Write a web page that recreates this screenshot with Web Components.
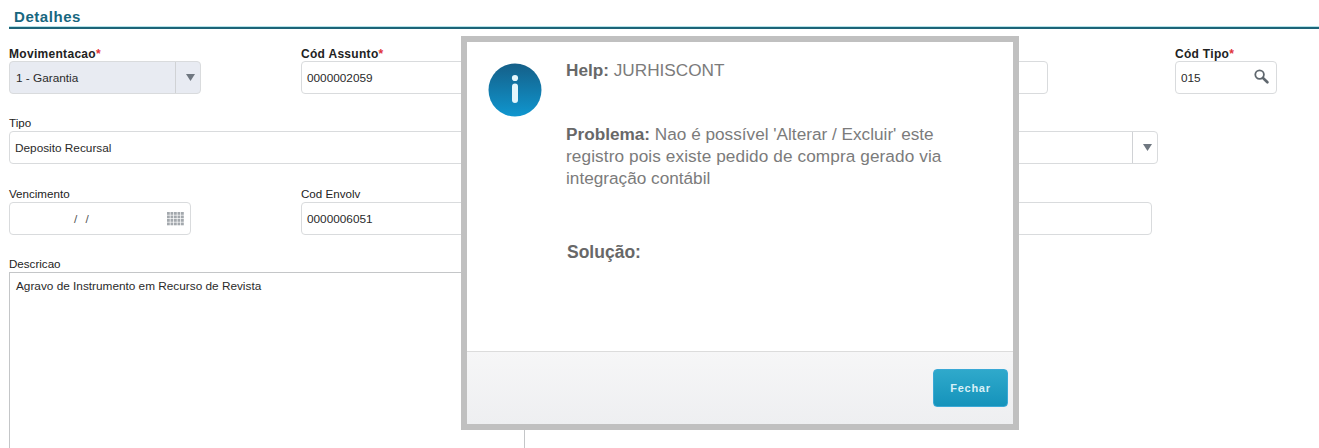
<!DOCTYPE html>
<html lang="pt">
<head>
<meta charset="utf-8">
<title>Detalhes</title>
<style>
    html, body { margin: 0; padding: 0; background: #fff; height: 448px; overflow: hidden; }
    body { font-family: "Liberation Sans", Arial, sans-serif; position: relative; }
</style>
</head>
<body>
<detail-form></detail-form>
<help-dialog></help-dialog>

<script>
class FormSection extends HTMLElement {
    constructor() {
        super();
        this.attachShadow({ mode: "open" });
        this.shadowRoot.innerHTML = `
            <style>
                :host { display: block; padding: 9px 0 0 9px; height: 448px; overflow: hidden; box-sizing: border-box; }
                h2 {
                    margin: 0;
                    padding-left: 5px;
                    font-size: 15px;
                    letter-spacing: .55px;
                    line-height: 16px;
                    font-weight: bold;
                    color: #17677f;
                    height: 18px;
                    border-bottom: 2px solid #1d6478;
                    box-shadow: 0 -1px 0 #b4e4ea inset;
                }
                .rows { display: flex; flex-direction: column; padding-top: 18px; }
                .row { display: flex; align-items: flex-start; }
                .r1 { height: 70px; }
                .r2 { height: 71px; }
                .r3 { height: 70px; }
            </style>
            <h2>Detalhes</h2>
            <div class="rows">
                <div class="row r1">
                    <form-field label="Movimentacao" required value="1 - Garantia" kind="select" disabled style="width:192px;margin-right:100px"></form-field>
                    <form-field label="Cód Assunto" required value="0000002059" style="width:747px;margin-right:127px"></form-field>
                    <form-field label="Cód Tipo" required value="015" kind="search" style="width:102px"></form-field>
                </div>
                <div class="row r2">
                    <form-field label="Tipo" value="Deposito Recursal" kind="select" plain style="width:1149px"></form-field>
                </div>
                <div class="row r3">
                    <form-field label="Vencimento" plain value="/ /" kind="date" style="width:182px;margin-right:110px"></form-field>
                    <form-field label="Cod Envolv" plain value="0000006051" style="width:851px"></form-field>
                </div>
                <div class="row">
                    <form-field label="Descricao" plain value="Agravo de Instrumento em Recurso de Revista" kind="area" style="width:516px"></form-field>
                </div>
            </div>
        `;
    }
}

class FormField extends HTMLElement {
    constructor() {
        super();
        this.attachShadow({ mode: "open" });
    }

    // calendar glyph: 5 x 4 small squares
    gridIcon() {
        let cells = "";
        for (let r = 0; r < 4; r++) {
            for (let c = 0; c < 5; c++) {
                cells += `<rect x="${c * 3.5}" y="${r * 3.5}" width="2.8" height="2.8"/>`;
            }
        }
        return `<svg width="17" height="14" viewBox="0 0 17 14" fill="#a3a8ad">${cells}</svg>`;
    }

    connectedCallback() {
        const kind = this.getAttribute("kind") || "text";
        const plain = this.hasAttribute("plain");
        let tail = "";
        if (kind === "select") {
            tail = `<span class="arrow"><svg width="9" height="7" viewBox="0 0 9 7"><path d="M0 0h9L4.5 7z" fill="#6f7780"/></svg></span>`;
        } else if (kind === "search") {
            tail = `<span class="icon search"><svg width="15" height="15" viewBox="0 0 15 15" fill="none"><circle cx="5.6" cy="5.6" r="4.3" stroke="#5f676e" stroke-width="1.8"/><path d="M9 9l4.4 4.3" stroke="#5f676e" stroke-width="2.6" stroke-linecap="round"/></svg></span>`;
        } else if (kind === "date") {
            tail = `<span class="icon">${this.gridIcon()}</span>`;
        }
        this.shadowRoot.innerHTML = `
            <style>
                :host { display: block; flex: none; }
                label {
                    display: block;
                    height: 14px;
                    line-height: 12px;
                    font-size: 11.6px;
                    color: #222;
                    white-space: nowrap;
                }
                label.strong { font-weight: bold; font-size: 12px; letter-spacing: .3px; line-height: 14px; }
                label b { color: #e0333a; font-weight: bold; }
                .box {
                    display: flex;
                    align-items: center;
                    height: 33px;
                    box-sizing: border-box;
                    border: 1px solid #d9dbdd;
                    border-radius: 4px;
                    background: #fff;
                    font-size: 11.8px;
                    color: #2a2a2a;
                    padding-left: 5px;
                }
                .box.off { background: #e8ebf2; padding-left: 6px; }
                .box .val { flex: 1; white-space: nowrap; }
                .box.date .val { padding-left: 59px; word-spacing: 5px; color: #555; }
                .box.area {
                    align-items: flex-start;
                    height: 220px;
                    border-color: #c4c6c8;
                    border-radius: 0;
                    padding: 6px 0 0 6px;
                }
                .arrow {
                    flex: none;
                    width: 25px;
                    height: 100%;
                    box-sizing: border-box;
                    border-left: 1px solid #d0d2d5;
                    display: flex;
                    align-items: center;
                    justify-content: center;
                    padding-left: 4px;
                }
                .icon { flex: none; display: flex; padding-right: 6px; }
                .icon.search { padding-right: 7px; margin-top: -3px; }
            </style>
            <label class="${plain ? "" : "strong"}">${this.getAttribute("label")}${this.hasAttribute("required") ? "<b>*</b>" : ""}</label>
            <div class="box ${kind} ${this.hasAttribute("disabled") ? "off" : ""}">
                <span class="val">${this.getAttribute("value")}</span>${tail}
            </div>
        `;
    }
}

class HelpDialog extends HTMLElement {
    constructor() {
        super();
        this.attachShadow({ mode: "open" });
        this.shadowRoot.innerHTML = `
            <style>
                :host {
                    display: flex;
                    flex-direction: column;
                    position: absolute;
                    left: 461px;
                    top: 36px;
                    width: 558px;
                    height: 394px;
                    box-sizing: border-box;
                    border: 6px solid #c0c0c0;
                    background: #fff;
                    color: #7b7b7b;
                    font-size: 17.2px;
                }
                .body { flex: 1; display: flex; padding: 17px 0 0 21px; }
                .logo { flex: none; margin-top: 4px; width: 54px; height: 54px; }
                .text { padding: 0 0 0 24px; width: 400px; }
                b { color: #686868; }
                p { margin: 0; line-height: 22px; }
                p span { display: block; white-space: nowrap; }
                .help { height: 64px; }
                .problem { height: 118px; }
                .problem .wide { letter-spacing: .1px; }
                .solution { font-size: 17.5px; margin-left: 1px; }
                .foot {
                    flex: none;
                    height: 73px;
                    box-sizing: border-box;
                    border-top: 1px solid #dcdcdc;
                    background: linear-gradient(#f6f6f7, #eeeff1);
                    display: flex;
                    justify-content: flex-end;
                    align-items: flex-end;
                    padding: 0 5px 17px 0;
                }
                button {
                    width: 75px;
                    height: 38px;
                    border: 1px solid #3aa9d6;
                    border-radius: 4px;
                    background: linear-gradient(#2fa9cb, #1593bb);
                    color: #d8f0f7;
                    font: bold 11px "Liberation Sans", Arial, sans-serif;
                    letter-spacing: .7px;
                    padding: 0;
                }
            </style>
            <div class="body">
                <svg class="logo" viewBox="0 0 54 54">
                    <defs><linearGradient id="g" x1="0" y1="0" x2="0" y2="1"><stop offset="0" stop-color="#155f88"/><stop offset="1" stop-color="#0f96cf"/></linearGradient></defs>
                    <circle cx="27" cy="27" r="26.5" fill="url(#g)"/>
                    <circle cx="27" cy="15" r="3.1" fill="#e4f6fc"/>
                    <rect x="24" y="20.5" width="6" height="19.5" rx="3" fill="#e4f6fc"/>
                </svg>
                <div class="text">
                    <p class="help"><b>Help:</b> JURHISCONT</p>
                    <p class="problem">
                        <span><b>Problema:</b> Nao é possível 'Alterar / Excluir' este</span>
                        <span class="wide">registro pois existe pedido de compra gerado via</span>
                        <span>integração contábil</span>
                    </p>
                    <p class="solution"><b>Solução:</b></p>
                </div>
            </div>
            <div class="foot"><button>Fechar</button></div>
        `;
    }
}

customElements.define("form-field", FormField);
customElements.define("detail-form", FormSection);
customElements.define("help-dialog", HelpDialog);
</script>
</body>
</html>
